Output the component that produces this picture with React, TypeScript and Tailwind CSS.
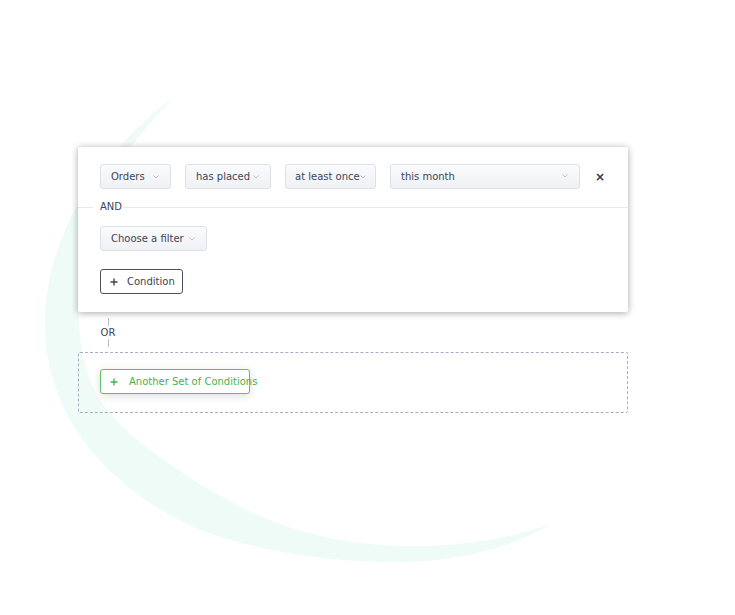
import React from "react";

function Chevron() {
  return (
    <svg width="6" height="4" viewBox="0 0 6 4" className="shrink-0">
      <polyline points="0.5,0.5 3,3 5.5,0.5" fill="none" stroke="#b8bcc6" strokeWidth="0.9" />
    </svg>
  );
}

function Select({ label, width, textTop }: { label: string; width: string; textTop?: boolean }) {
  return (
    <div
      className={`flex h-[25px] ${width} shrink-0 ${textTop ? "items-start pt-[4px]" : "items-center"} justify-between rounded-[3px] border border-[#dde0e7] bg-gradient-to-b from-[#fafbfc] to-[#eff1f5] pl-[10px] pr-[11px] text-[10px] text-[#3d4457]`}
    >
      <span className="whitespace-nowrap">{label}</span>
      <span className={textTop ? "pt-[5px]" : ""}>
        <Chevron />
      </span>
    </div>
  );
}

function Plus({ color }: { color: string }) {
  return (
    <svg width="8" height="8" viewBox="0 0 8 8" className="shrink-0">
      <path d="M4 0.5V7.5M0.5 4H7.5" stroke={color} strokeWidth="1.4" />
    </svg>
  );
}

export default function App() {
  return (
    <div
      className="relative h-[615px] w-[735px] overflow-hidden bg-white"
      style={{ fontFamily: "'DejaVu Sans', 'Liberation Sans', sans-serif" }}
    >
      <svg className="pointer-events-none absolute left-0 top-0" width="735" height="615" viewBox="0 0 735 615">
        <path
          d="M177 95 C100 150 42 240 45 330 C48 420 110 490 200 530 C260 552 330 562 390 562 C455 563 510 548 552 524 C505 540 455 547 407 546 C320 545 260 520 210 490 C160 460 120 430 100 400 C75 360 75 300 85 250 C100 180 140 130 177 95 Z"
          fill="#effbf6"
        />
      </svg>

      <div className="relative pl-[78px] pt-[147px]">
        {/* main condition set */}
        <div className="w-[550px] rounded-[2px] bg-white pb-[18px] pt-[17px] shadow-[0_1px_7px_rgba(0,0,0,0.35)]">
          <div className="flex items-center gap-[14px] pl-[22px]">
            <Select label="Orders" width="w-[71px]" />
            <Select label="has placed" width="w-[86px]" />
            <div className="flex h-[25px] w-[91px] shrink-0 items-start rounded-[3px] border border-[#dde0e7] bg-gradient-to-b from-[#fafbfc] to-[#eff1f5] pl-[9px] pt-[4px] text-[10px] text-[#3d4457]">
              <span className="whitespace-nowrap">at least once</span>
              <span className="pt-[6px]">
                <Chevron />
              </span>
            </div>
            <Select label="this month" width="w-[190px]" textTop />
            <span className="ml-[1px] text-[12px] font-bold leading-none text-[#2f3546]">×</span>
          </div>

          <div className="mt-[11px] flex items-center">
            <div className="h-px w-[15px] bg-[#e6e8ec]" />
            <span className="bg-white pl-[7px] pr-[1px] text-[10px] leading-[14px] text-[#3d4457]">AND</span>
            <div className="h-px flex-1 bg-[#e6e8ec]" />
          </div>

          <div className="mt-[12px] pl-[22px]">
            <div className="flex h-[25px] w-[107px] items-center justify-between rounded-[3px] border border-[#dde0e7] bg-gradient-to-b from-[#fafbfc] to-[#eff1f5] pl-[10px] pr-[11px] text-[10px] text-[#3d4457]">
              <span className="whitespace-nowrap">Choose a filter</span>
              <Chevron />
            </div>
          </div>

          <div className="mt-[18px] pl-[22px]">
            <button className="flex h-[25px] w-[83px] items-center gap-[9px] rounded-[3px] border border-[#4b5163] bg-white pl-[9px] text-[10px] text-[#3d4457]">
              <Plus color="#3d4457" />
              <span>Condition</span>
            </button>
          </div>
        </div>

        {/* OR connector */}
        <div className="ml-[22px] flex w-[16px] flex-col items-center pt-[6px]">
          <div className="h-[8px] w-px bg-[#b9bdc7]" />
          <span className="text-[10px] leading-[13px] text-[#3d4457]">OR</span>
          <div className="h-[8px] w-px bg-[#b9bdc7]" />
        </div>

        {/* another set */}
        <div className="mt-[5px] h-[61px] w-[550px] rounded-[2px] border border-dashed border-[#a8adc2] pl-[21px] pt-[16px]">
          <button className="flex h-[25px] w-[150px] items-center gap-[11px] whitespace-nowrap rounded-[3px] border border-[#5cbf6c] bg-white pl-[9px] text-[10px] text-[#3fb450] shadow-[0_2px_8px_rgba(0,0,0,0.13)]">
            <Plus color="#3fb450" />
            <span>Another Set of Conditions</span>
          </button>
        </div>
      </div>
    </div>
  );
}
